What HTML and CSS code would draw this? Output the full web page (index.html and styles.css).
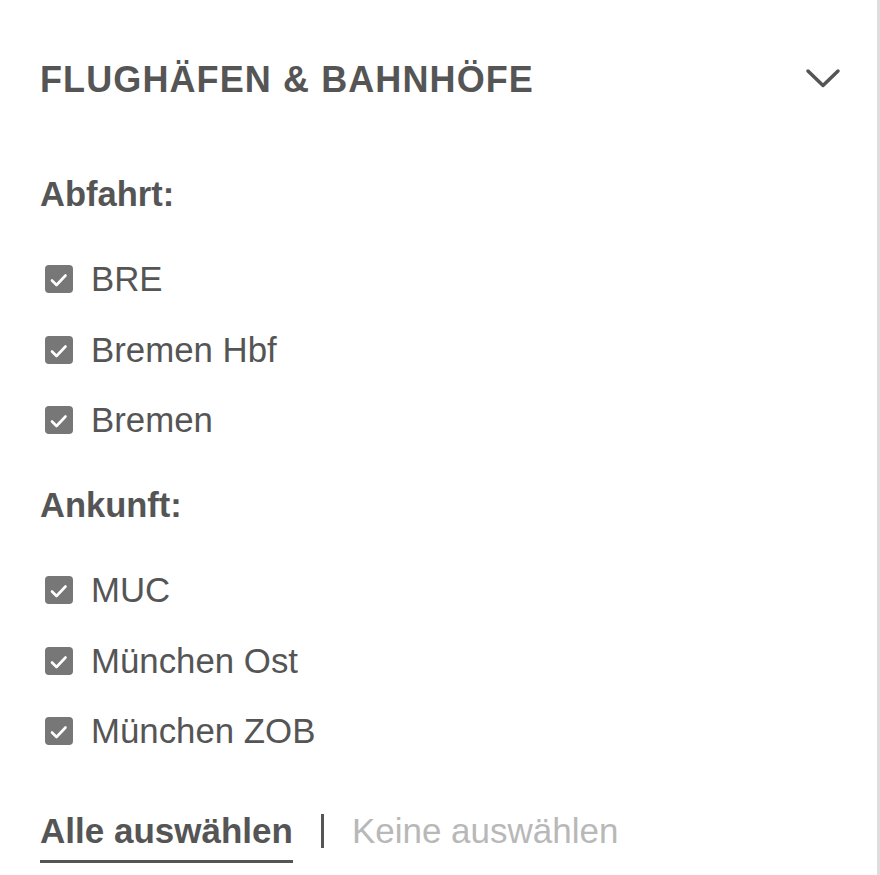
FILE: index.html
```html
<!DOCTYPE html>
<html lang="de">
<head>
<meta charset="utf-8">
<link rel="stylesheet" href="styles.css">
</head>
<body>
<div class="panel">
  <div class="head">
    <h2 class="title">FLUGHÄFEN &amp; BAHNHÖFE</h2>
    <svg class="chev" width="40" height="24" viewBox="0 0 40 24"><polyline points="4,4 19,18.5 34,4" fill="none" stroke="#555" stroke-width="3.5" stroke-linecap="round" stroke-linejoin="round"/></svg>
  </div>

  <div class="label">Abfahrt:</div>
  <ul class="list">
    <li class="item"><span class="box"><svg width="28" height="28" viewBox="0 0 28 28"><polyline points="7,15.5 11.5,20 20.5,10.5" fill="none" stroke="#fff" stroke-width="2.6" stroke-linecap="round" stroke-linejoin="round"/></svg></span>BRE</li>
    <li class="item"><span class="box"><svg width="28" height="28" viewBox="0 0 28 28"><polyline points="7,15.5 11.5,20 20.5,10.5" fill="none" stroke="#fff" stroke-width="2.6" stroke-linecap="round" stroke-linejoin="round"/></svg></span>Bremen Hbf</li>
    <li class="item"><span class="box"><svg width="28" height="28" viewBox="0 0 28 28"><polyline points="7,15.5 11.5,20 20.5,10.5" fill="none" stroke="#fff" stroke-width="2.6" stroke-linecap="round" stroke-linejoin="round"/></svg></span>Bremen</li>
  </ul>

  <div class="label">Ankunft:</div>
  <ul class="list">
    <li class="item"><span class="box"><svg width="28" height="28" viewBox="0 0 28 28"><polyline points="7,15.5 11.5,20 20.5,10.5" fill="none" stroke="#fff" stroke-width="2.6" stroke-linecap="round" stroke-linejoin="round"/></svg></span>MUC</li>
    <li class="item"><span class="box"><svg width="28" height="28" viewBox="0 0 28 28"><polyline points="7,15.5 11.5,20 20.5,10.5" fill="none" stroke="#fff" stroke-width="2.6" stroke-linecap="round" stroke-linejoin="round"/></svg></span>München Ost</li>
    <li class="item"><span class="box"><svg width="28" height="28" viewBox="0 0 28 28"><polyline points="7,15.5 11.5,20 20.5,10.5" fill="none" stroke="#fff" stroke-width="2.6" stroke-linecap="round" stroke-linejoin="round"/></svg></span>München ZOB</li>
  </ul>

  <div class="actions">
    <span class="all">Alle auswählen</span>
    <span class="sep"></span>
    <span class="none">Keine auswählen</span>
  </div>
</div>
</body>
</html>
```
FILE: styles.css
```css
html, body {
  margin: 0;
  padding: 0;
  background: #fff;
}
body {
  font-family: "Liberation Sans", Arial, sans-serif;
  color: #555;
}
.panel {
  width: 880px;
  height: 875px;
  box-sizing: border-box;
  padding: 58px 33px 0 40px;
  border-right: 3px solid #dedede;
}
.head {
  display: flex;
  align-items: center;
  justify-content: space-between;
  height: 44px;
}
.title {
  margin: 0;
  font-size: 36px;
  line-height: 44px;
  font-weight: 700;
  letter-spacing: 1.1px;
  color: #555;
}
.chev {
  display: block;
  margin-top: -2px;
}
.label {
  margin-top: 72px;
  font-size: 34.5px;
  line-height: 40px;
  font-weight: 700;
  color: #555;
}
.list {
  list-style: none;
  margin: 30px 0 0;
  padding: 0;
}
.list + .label {
  margin-top: 29.5px;
}
.item {
  display: flex;
  align-items: center;
  height: 70.5px;
  font-size: 34.8px;
  color: #555;
}
.box {
  width: 28px;
  height: 28px;
  border-radius: 4px;
  background: #777;
  margin: 0 18px 0 5px;
  flex: none;
}
.box svg {
  display: block;
}
.actions {
  display: flex;
  align-items: flex-start;
  margin-top: 44px;
  font-size: 35px;
  line-height: 40px;
}
.all {
  font-weight: 700;
  color: #555;
  padding-bottom: 9px;
  border-bottom: 3px solid #555;
}
.sep {
  width: 3px;
  height: 34px;
  background: #555;
  margin: 3px 28px 0;
}
.none {
  color: #b8b8b8;
}
```
